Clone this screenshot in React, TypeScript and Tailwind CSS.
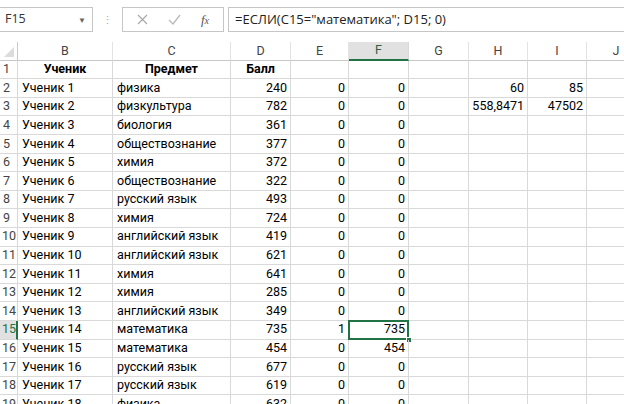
import React from "react";

const rows: [string, string, string, string, string, string, string][] = [
  ["Ученик 1", "физика", "240", "0", "0", "60", "85"],
  ["Ученик 2", "физкультура", "782", "0", "0", "558,8471", "47502"],
  ["Ученик 3", "биология", "361", "0", "0", "", ""],
  ["Ученик 4", "обществознание", "377", "0", "0", "", ""],
  ["Ученик 5", "химия", "372", "0", "0", "", ""],
  ["Ученик 6", "обществознание", "322", "0", "0", "", ""],
  ["Ученик 7", "русский язык", "493", "0", "0", "", ""],
  ["Ученик 8", "химия", "724", "0", "0", "", ""],
  ["Ученик 9", "английский язык", "419", "0", "0", "", ""],
  ["Ученик 10", "английский язык", "621", "0", "0", "", ""],
  ["Ученик 11", "химия", "641", "0", "0", "", ""],
  ["Ученик 12", "химия", "285", "0", "0", "", ""],
  ["Ученик 13", "английский язык", "349", "0", "0", "", ""],
  ["Ученик 14", "математика", "735", "1", "735", "", ""],
  ["Ученик 15", "математика", "454", "0", "454", "", ""],
  ["Ученик 16", "русский язык", "677", "0", "0", "", ""],
  ["Ученик 17", "русский язык", "619", "0", "0", "", ""],
  ["Ученик 18", "физика", "632", "0", "0", "", ""],
];

const cols = ["B", "C", "D", "E", "F", "G", "H", "I", "J"];

const cell = "border-r border-b border-[#d9d9d9] flex items-center overflow-hidden whitespace-nowrap";

function RowHeader({ n, selected }: { n: number; selected?: boolean }) {
  return selected ? (
    <div className="flex items-center pl-[2px] border-b border-[#d9d9d9] border-r-2 border-r-[#217346] bg-[#e1e1e1] text-[#217346]">
      {n}
    </div>
  ) : (
    <div className={`flex items-center ${n < 10 ? "pl-[3px]" : "pl-[2px]"} border-r border-b border-[#d9d9d9] text-[#444]`}>{n}</div>
  );
}

export default function App() {
  return (
    <div
      className="w-[624px] h-[404px] overflow-hidden bg-white text-[12.5px] text-black"
      style={{ fontFamily: "Roboto, 'Open Sans', sans-serif" }}
    >
      {/* formula bar */}
      <div className="flex items-center h-[42px] pt-[7px] pb-[10px]" style={{ fontFamily: "'Open Sans', sans-serif" }}>
        <div className="flex items-center w-[93px] h-[25px] border border-l-0 border-[#c6c6c6] pl-[5px] pr-[6px] text-[12.5px] text-[#333]">
          <span className="flex-1">F15</span>
          <span className="text-[8px] text-[#666]">▼</span>
        </div>
        <div className="w-[29px] flex justify-center text-[#aaa] text-[11px] leading-none">⋮</div>
        <div className="flex items-center justify-between w-[102px] h-[25px] border border-[#c6c6c6] px-[14px] text-[#9a9a9a]">
          <svg width="11" height="11" viewBox="0 0 11 11">
            <path d="M1 1 L10 10 M10 1 L1 10" stroke="#a8a8a8" strokeWidth="1.2" />
          </svg>
          <svg width="13" height="11" viewBox="0 0 13 11">
            <path d="M1 6 L5 10 L12 1" stroke="#b8b8b8" strokeWidth="1.3" fill="none" />
          </svg>
          <span
            className="italic text-[13px] text-[#555] leading-none"
            style={{ fontFamily: "'Liberation Serif', serif" }}
          >
            f<span className="text-[10px]">x</span>
          </span>
        </div>
        <div className="flex-1 ml-[4px] h-[25px] border-t border-b border-l border-[#c6c6c6] flex items-center pl-[6px] text-[13px] text-[#222]">
          =ЕСЛИ(C15="математика"; D15; 0)
        </div>
      </div>

      {/* sheet */}
      <div className="grid grid-cols-[18px_95px_118px_60px_58px_60px_60px_59px_59px_59px] auto-rows-[18.6px] leading-none">
        {/* header row */}
        <div className="relative border-r border-b border-[#c8c8c8] bg-white">
          <svg className="absolute right-[3px] bottom-[3px]" width="10" height="10" viewBox="0 0 10 10">
            <path d="M10 0 L10 10 L0 10 Z" fill="#dcdcdc" />
          </svg>
        </div>
        {cols.map((c) =>
          c === "F" ? (
            <div
              key={c}
              className="flex items-center justify-center bg-[#e1e1e1] border-r border-[#d9d9d9] border-b-2 border-b-[#217346] text-[#2f5f45]"
            >
              {c}
            </div>
          ) : (
            <div key={c} className="flex items-center justify-center border-r border-[#e3e3e3] border-b border-b-[#c8c8c8] text-[#444]">
              {c}
            </div>
          )
        )}

        {/* row 1 */}
        <RowHeader n={1} />
        <div className={`${cell} justify-center font-bold`}>Ученик</div>
        <div className={`${cell} justify-center font-bold`}>Предмет</div>
        <div className={`${cell} justify-center font-bold`}>Балл</div>
        <div className={cell}></div>
        <div className={cell}></div>
        <div className={cell}></div>
        <div className={cell}></div>
        <div className={cell}></div>
        <div className={cell}></div>

        {rows.map((r, i) => {
          const n = i + 2;
          const sel = n === 15;
          return (
            <React.Fragment key={n}>
              <RowHeader n={n} selected={sel} />
              <div className={`${cell} pl-[4px]`}>{r[0]}</div>
              <div className={`${cell} pl-[4px]`}>{r[1]}</div>
              <div className={`${cell} justify-end pr-[3px]`}>{r[2]}</div>
              <div className={`${cell} justify-end pr-[3px]`}>{r[3]}</div>
              <div className={`${cell} justify-end pr-[3px] relative overflow-visible`}>
                {r[4]}
                {sel && (
                  <>
                    <div className="absolute left-[-1px] top-[-1px] right-[-1px] bottom-[-1px] border-2 border-[#217346]" />
                    <div className="absolute right-[-4px] bottom-[-4px] w-[6px] h-[6px] bg-[#217346] border border-white" />
                  </>
                )}
              </div>
              <div className={cell}></div>
              <div className={`${cell} justify-end pr-[3px]`}>{r[5]}</div>
              <div className={`${cell} justify-end pr-[3px]`}>{r[6]}</div>
              <div className={cell}></div>
            </React.Fragment>
          );
        })}
      </div>
    </div>
  );
}
